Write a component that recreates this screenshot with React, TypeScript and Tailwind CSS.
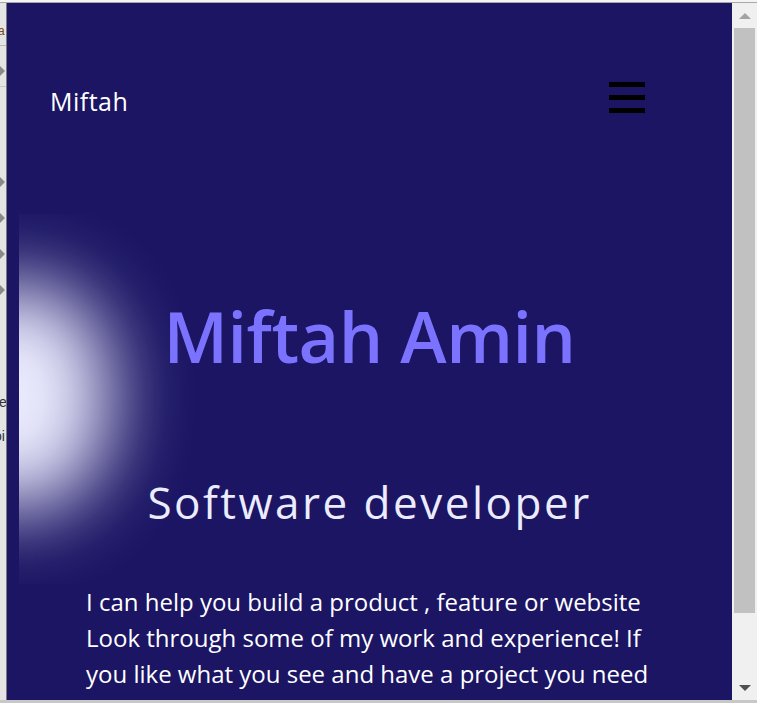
import React from "react";

export default function App() {
  const font = { fontFamily: '"Open Sans", "Noto Sans", sans-serif' };
  return (
    <div className="w-[757px] h-[703px] flex flex-col overflow-hidden bg-[#f0f0f0]" style={font}>
      <div className="h-[3px] bg-[#f4f4f4] border-b border-[#a8a8a8]" />
      <div className="flex flex-1 min-h-0">
        {/* left strip */}
        <div className="w-[6px] bg-[#e4e4e4] overflow-hidden flex flex-col text-[12px] leading-none text-[#7a4a10]" style={{ fontFamily: '"Liberation Sans", sans-serif' }}>
          <div className="mt-[22px] -ml-[2px] whitespace-nowrap">a</div>
          <div className="mt-[8px] h-px bg-[#b8b8b8]" />
          <div className="mt-[20px] w-0 h-0 border-y-[5px] border-y-transparent border-l-[5px] border-l-[#8a8a8a]" />
          <div className="mt-[10px] h-px bg-[#c8c8c8]" />
          <div className="mt-[90px] w-0 h-0 border-y-[5px] border-y-transparent border-l-[5px] border-l-[#8a8a8a]" />
          <div className="mt-[26px] w-0 h-0 border-y-[5px] border-y-transparent border-l-[5px] border-l-[#8a8a8a]" />
          <div className="mt-[26px] w-0 h-0 border-y-[5px] border-y-transparent border-l-[5px] border-l-[#8a8a8a]" />
          <div className="mt-[26px] w-0 h-0 border-y-[5px] border-y-transparent border-l-[5px] border-l-[#8a8a8a]" />
          <div className="mt-[100px] -ml-[4px] whitespace-nowrap text-[#333] text-[14px]">le</div>
          <div className="mt-[20px] -ml-[6px] whitespace-nowrap text-[#333] text-[14px]">oi</div>
        </div>
        <div className="w-px bg-[#7a7a7a]" />
        {/* main */}
        <div className="relative flex-1 overflow-hidden bg-[#1b1564] flex flex-col">
          <div className="absolute left-[12px] top-[211px] w-[220px] h-[370px] overflow-hidden">
            <div className="absolute left-[-95px] top-[68px] w-[185px] h-[230px] rounded-full bg-[#ececff] blur-[40px]" />
          </div>
          <div className="relative mt-[79px] h-[38px] flex items-center justify-between pl-[43px] pr-[87px]">
            <span className="text-[25px] text-white leading-none font-medium tracking-[0.5px]">Miftah</span>
            <div className="flex flex-col gap-[8px] mb-[8px]">
              <div className="w-[36px] h-[5px] bg-black" />
              <div className="w-[36px] h-[5px] bg-black" />
              <div className="w-[36px] h-[5px] bg-black" />
            </div>
          </div>
          <h1 className="relative mt-[181px] text-center text-[70px] leading-none font-semibold text-[#7b73ff] tracking-[-0.5px]">Miftah Amin</h1>
          <h2 className="relative mt-[109px] text-center text-[44px] leading-none tracking-[2.5px] text-[#ececff]">Software developer</h2>
          <p className="relative mt-[60px] pl-[79px] text-[24px] leading-[36px] text-white whitespace-nowrap">
            I can help you build a product , feature or website
            <br />
            Look through some of my work and experience! If
            <br />
            you like what you see and have a project you need
          </p>
        </div>
        {/* scrollbar */}
        <div className="w-[25px] bg-[#f0f0f0] flex flex-col items-center">
          <div className="h-[25px] flex items-center justify-center">
            <div className="w-0 h-0 border-x-[6px] border-x-transparent border-b-[6px] border-b-[#a3a3a3]" />
          </div>
          <div className="w-[21px] h-[585px] bg-[#c1c1c1]" />
          <div className="flex-1" />
          <div className="h-[25px] flex items-center justify-center">
            <div className="w-0 h-0 border-x-[6px] border-x-transparent border-t-[6px] border-t-[#505050]" />
          </div>
        </div>
      </div>
      <div className="h-[3px] bg-[#c8c8c8]" />
    </div>
  );
}
